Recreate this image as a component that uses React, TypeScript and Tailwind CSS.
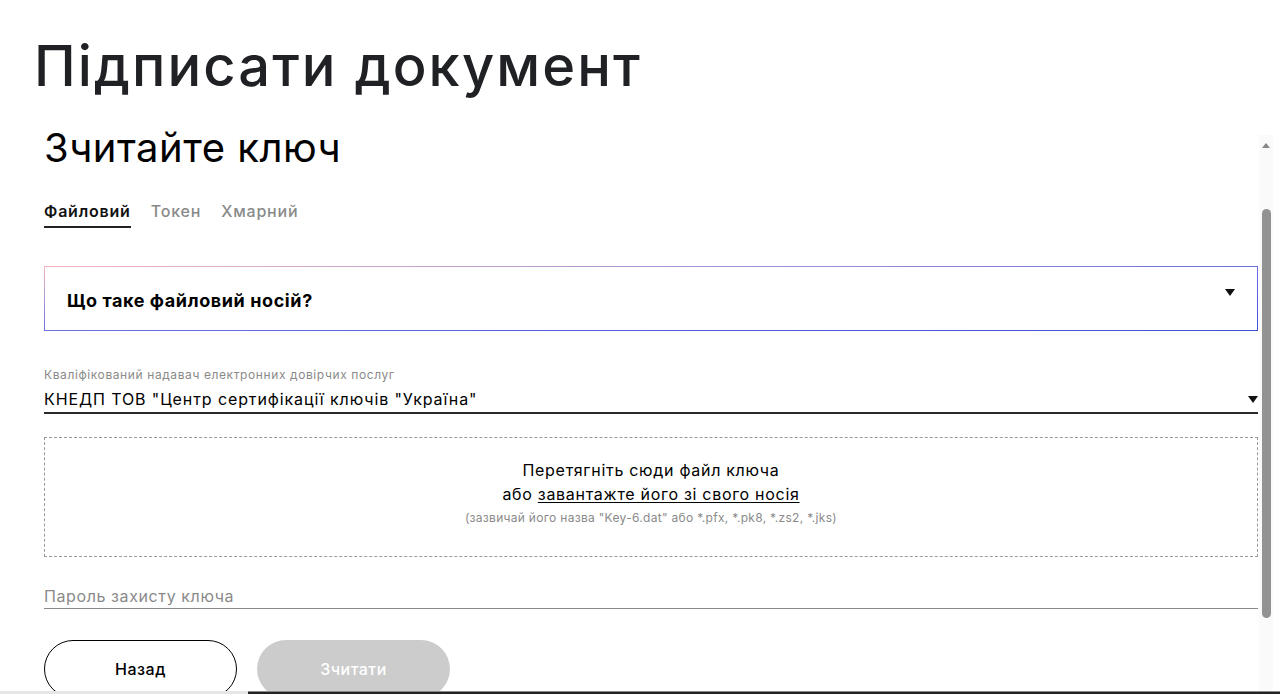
import React from 'react';

function Caret() {
  return (
    <svg width="10" height="7" viewBox="0 0 10 7" className="shrink-0">
      <path d="M0 0 H10 L5 7 Z" fill="#111" />
    </svg>
  );
}

export default function App() {
  return (
    <div className="h-[694px] w-[1280px] flex flex-col overflow-hidden bg-white text-[#1a1a1a] font-['Inter','Noto_Sans',sans-serif]">
      <h1 className="pl-[34px] pt-[30px] text-[56px] leading-[72px] tracking-[2.1px] text-[#202124] font-medium">
        Підписати документ
      </h1>

      <div className="flex flex-1 min-h-0">
        <div className="flex-1 pl-[44px] pt-[21px]">
          <h2 className="text-[40px] leading-[50px] tracking-[0.5px] text-black font-normal">Зчитайте ключ</h2>

          <div className="flex gap-[20px] mt-[26px] text-[16px] tracking-[0.8px]">
            <div className="pb-[3px] border-b-2 border-[#222] font-semibold text-[#111]">Файловий</div>
            <div className="font-medium text-[#8a8a8a]">Токен</div>
            <div className="font-medium text-[#8a8a8a]">Хмарний</div>
          </div>

          <div className="mt-[38px] p-[1px] bg-gradient-to-br from-[#f4b7bd] via-[#6b6fe0] to-[#3c4fdc]">
            <div className="bg-white h-[63px] flex items-center justify-between pl-[22px] pr-[22px]">
              <span className="mt-[3px] text-[18px] tracking-[0.6px] font-bold text-black">Що таке файловий носій?</span>
              <span className="-mt-[12px]"><Caret /></span>
            </div>
          </div>

          <div className="mt-[36px] text-[12px] leading-[16px] tracking-[0.6px] text-[#8a8a8a]">
            Кваліфікований надавач електронних довірчих послуг
          </div>
          <div className="mt-[6px] flex items-center justify-between border-b-2 border-[#2a2a2a] pb-[3px]">
            <span className="text-[16px] leading-[20px] tracking-[0.9px] text-black">КНЕДП ТОВ "Центр сертифікації ключів "Україна"</span>
            <Caret />
          </div>

          <div className="mt-[23px] h-[120px] border border-dashed border-[#9a9a9a] flex flex-col items-center justify-center pb-[6px]">
            <div className="text-[16px] leading-[24px] tracking-[0.7px] text-black">Перетягніть сюди файл ключа</div>
            <div className="text-[16px] leading-[24px] tracking-[0.7px] text-black">
              або <span className="underline underline-offset-2">завантажте його зі свого носія</span>
            </div>
            <div className="text-[12px] leading-[24px] tracking-[0.3px] text-[#8a8a8a]">
              (зазвичай його назва "Key-6.dat" або *.pfx, *.pk8, *.zs2, *.jks)
            </div>
          </div>

          <div className="mt-[29px] border-b border-[#8a8a8a] pb-[2px] text-[16px] leading-[20px] tracking-[0.6px] text-[#8a8a8a]">
            Пароль захисту ключа
          </div>

          <div className="mt-[31px] flex gap-[20px]">
            <button className="w-[193px] h-[58px] rounded-full border-[1.5px] border-black text-[16px] tracking-[0.5px] font-medium text-black bg-white">
              Назад
            </button>
            <button className="w-[193px] h-[58px] rounded-full bg-[#cccccc] text-[16px] tracking-[0.5px] font-medium text-white">
              Зчитати
            </button>
          </div>
        </div>

        <div className="w-[22px] flex">
          <div className="mt-[33px] ml-[1px] w-[14px] bg-[#fafafa] flex flex-col items-center pt-[8px]">
            <svg width="8" height="5" viewBox="0 0 8 5"><path d="M0 5 L4 0 L8 5 Z" fill="#888" /></svg>
            <div className="mt-[61px] w-[9px] h-[409px] rounded-full bg-[#929292]" />
          </div>
        </div>
      </div>

      <div className="h-[3px] flex shrink-0">
        <div className="w-[248px] bg-[#e6e6e6]" />
        <div className="flex-1 bg-[#222] border-t border-[#888]" />
      </div>
    </div>
  );
}
